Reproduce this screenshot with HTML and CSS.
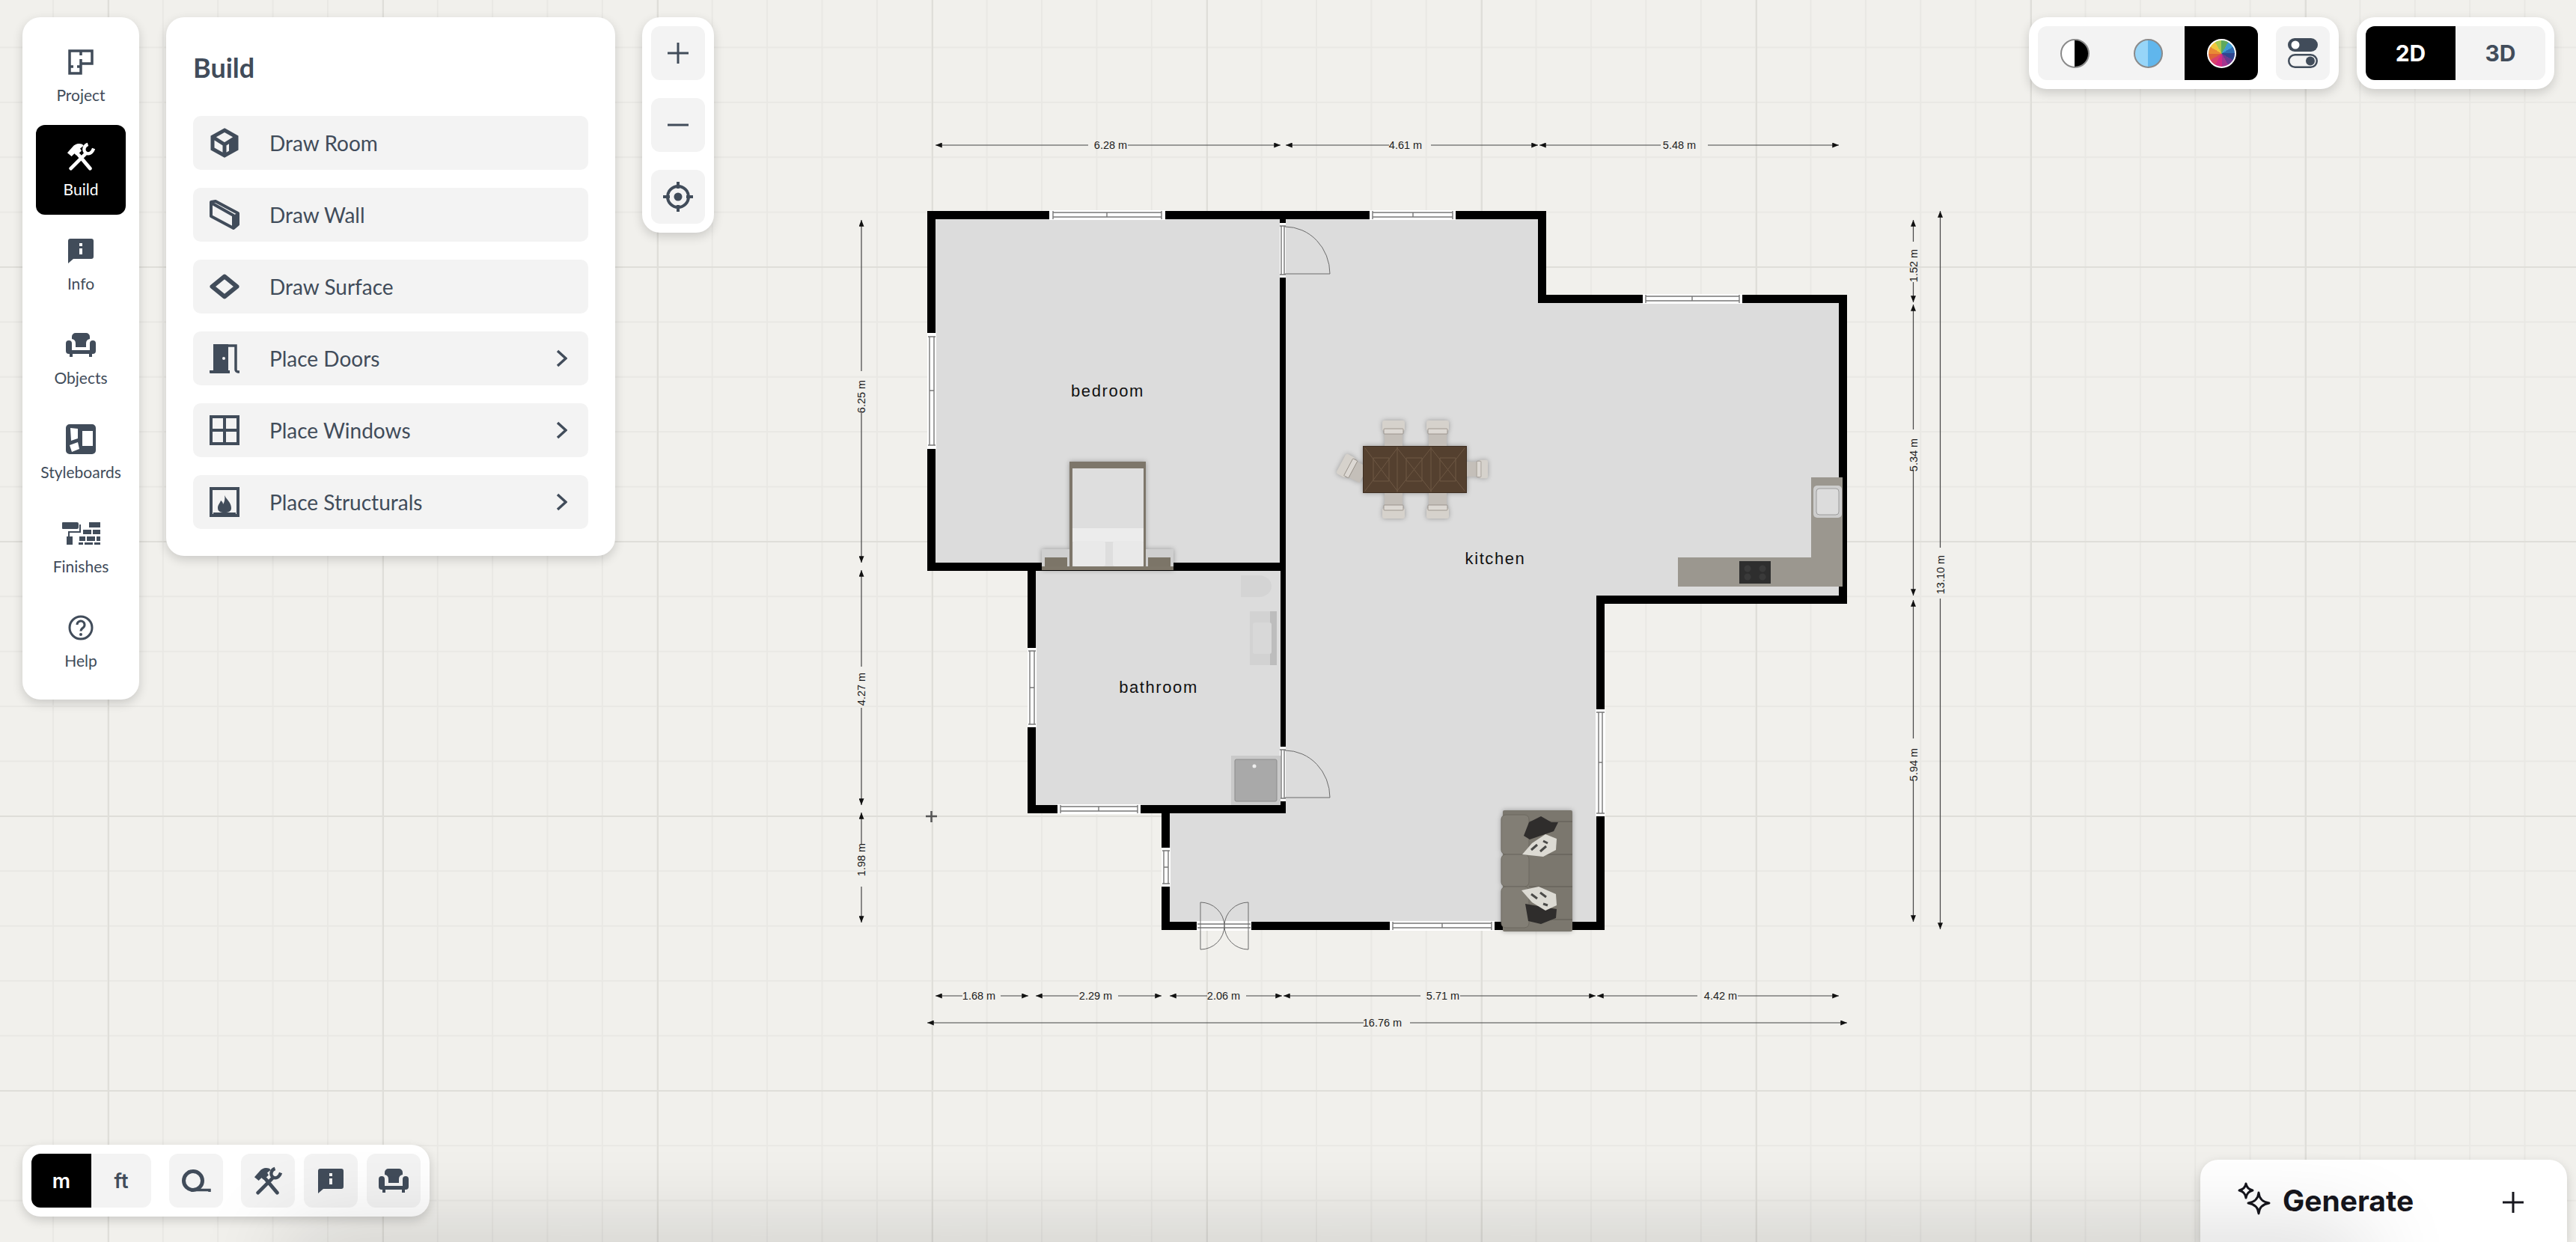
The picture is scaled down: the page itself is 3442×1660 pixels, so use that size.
FILE: index.html
```html
<!DOCTYPE html>
<html lang="en">
<head>
    <meta charset="UTF-8">
    <title>Floor Plan Editor</title>
    <link rel="stylesheet" href="styles.css">
</head>
<body>
    <svg class="plan" viewBox="0 0 3442 1660" width="3442" height="1660">
        <defs>
            <marker id="tip" viewBox="0 0 10 8" refX="10" refY="4" markerUnits="userSpaceOnUse" markerWidth="10" markerHeight="7" orient="auto-start-reverse">
                <path d="M0 0L10 4L0 8Z" fill="#111"/>
            </marker>
            <symbol id="chair" viewBox="0 0 30 34" overflow="visible">
                <rect x="0" y="0" width="30" height="14" rx="3" fill="#d6d2cc"/>
                <rect x="3" y="12" width="24" height="22" fill="#c4bfb9"/>
                <rect x="2" y="11" width="26" height="7" rx="1" fill="#dcd8d3" stroke="#8f8880" stroke-width=".8"/>
            </symbol>
        </defs>

        <!-- walls and floors -->
        <path class="walls" d="M1239 282H2066V394H2468V807H2144V1243H1552V1087H1373V763H1239Z"/>
        <rect class="floor" x="1250" y="293" width="460" height="459"/>
        <rect class="floor" x="1384" y="763" width="327" height="313"/>
        <path class="floor" d="M1718 293H2055V405H2457V796H2133V1232H1563V1087H1718Z"/>

        <!-- windows -->
        <g class="window">
            <rect x="1402" y="281" width="155" height="13"/>
            <path d="M1407 284H1552M1407 290H1552M1407 282V293M1552 282V293M1479 284V290"/>
        </g>
        <g class="window">
            <rect x="1830" y="281" width="115" height="13"/>
            <path d="M1834 284H1941M1834 290H1941M1834 282V293M1941 282V293M1888 284V290"/>
        </g>
        <g class="window">
            <rect x="2195" y="393" width="133" height="13"/>
            <path d="M2199 396H2324M2199 402H2324M2199 394V405M2324 394V405M2261 396V402"/>
        </g>
        <g class="window">
            <rect x="1239" y="445" width="12" height="155"/>
            <path d="M1242 450V595M1248 450V595M1240 450H1250M1240 595H1250M1242 522H1248"/>
        </g>
        <g class="window">
            <rect x="1373" y="866" width="12" height="106"/>
            <path d="M1376 870V968M1382 870V968M1374 870H1384M1374 968H1384M1376 919H1382"/>
        </g>
        <g class="window">
            <rect x="1413" y="1075" width="111" height="13"/>
            <path d="M1417 1078H1520M1417 1084H1520M1417 1076V1087M1520 1076V1087M1468 1078V1084"/>
        </g>
        <g class="window">
            <rect x="1552" y="1133" width="12" height="52"/>
            <path d="M1555 1137V1181M1561 1137V1181M1553 1137H1563M1553 1181H1563M1555 1159H1561"/>
        </g>
        <g class="window">
            <rect x="2132" y="948" width="13" height="143"/>
            <path d="M2136 952V1087M2141 952V1087M2133 952H2144M2133 1087H2144M2136 1019H2141"/>
        </g>
        <g class="window">
            <rect x="1857" y="1231" width="140" height="13"/>
            <path d="M1861 1234H1993M1861 1240H1993M1861 1232V1243M1993 1232V1243M1927 1234V1240"/>
        </g>

        <!-- doors -->
        <g class="window">
            <rect x="1710" y="298" width="8" height="73"/>
            <path d="M1712 302V367M1716 302V367M1710 302H1718M1710 367H1718"/>
            <rect x="1710" y="998" width="8" height="73"/>
            <path d="M1712 1002V1067M1716 1002V1067M1710 1002H1718M1710 1067H1718"/>
            <rect x="1599" y="1231" width="73" height="13"/>
            <path d="M1600 1235H1671M1600 1240H1671"/>
        </g>
        <path class="swing" d="M1717 303A60 63 0 0 1 1777 366H1717"/>
        <path class="swing" d="M1717 1003A60 63 0 0 1 1777 1066H1717"/>
        <path class="swing" d="M1604 1269V1206A32 32 0 0 1 1636 1237A32 32 0 0 1 1604 1269M1668 1269V1206A32 32 0 0 0 1636 1237A32 32 0 0 0 1668 1269"/>

        <!-- bed -->
        <g class="furniture">
            <rect x="1392" y="734" width="37" height="28" fill="#cfcfcf"/>
            <rect x="1531" y="734" width="37" height="28" fill="#cfcfcf"/>
            <rect x="1396" y="745" width="30" height="12" fill="#7c7568"/>
            <rect x="1534" y="745" width="30" height="12" fill="#7c7568"/>
            <rect x="1429" y="617" width="102" height="141" fill="#7d766a"/>
            <rect x="1433" y="626" width="95" height="131" fill="#dedede"/>
            <rect x="1433" y="706" width="95" height="18" fill="#ececec"/>
            <rect x="1434" y="723" width="43" height="34" rx="3" fill="#e9e9e9"/>
            <rect x="1487" y="723" width="41" height="34" rx="3" fill="#e9e9e9"/>
            <rect x="1392" y="757" width="176" height="5" fill="#7e776a"/>
        </g>

        <!-- bathroom -->
        <path d="M1658 769H1682A17 14.5 0 0 1 1682 798H1658Z" fill="#d4d4d4"/>
        <rect x="1670" y="817" width="36" height="72" fill="#d2d2d2"/>
        <rect x="1697" y="817" width="9" height="72" fill="#bdbdbd"/>
        <rect x="1674" y="832" width="25" height="42" rx="3" fill="#d8d8d8"/>
        <rect x="1645" y="1010" width="66" height="66" fill="#c9c9c9"/>
        <rect x="1650" y="1015" width="56" height="56" rx="2" fill="#a9a9a9" stroke="#8b8b8b"/>
        <circle cx="1676" cy="1024" r="2.5" fill="#eee"/>

        <!-- kitchen -->
        <path class="counter" d="M2420 638H2462V784H2242V745H2420Z"/>
        <rect x="2423" y="649" width="38" height="43" rx="5" fill="#cdcdcd"/>
        <rect x="2427" y="653" width="30" height="35" rx="4" fill="#dcdcdc" stroke="#9c9c9c"/>
        <rect x="2324" y="750" width="42" height="30" fill="#2e2e2e"/>
        <path d="M2335 760h.1M2355 760h.1M2335 771h.1M2355 771h.1" stroke="#3a3a3a" stroke-width="9" stroke-linecap="round"/>

        <!-- dining set -->
        <g class="furniture">
            <use href="#chair" x="1847" y="562" width="30" height="34"/>
            <use href="#chair" x="1906" y="562" width="30" height="34"/>
            <use href="#chair" transform="translate(1877 693) rotate(180)" width="30" height="34"/>
            <use href="#chair" transform="translate(1936 693) rotate(180)" width="30" height="34"/>
            <use href="#chair" transform="translate(1988 609) rotate(90)" width="36" height="28"/>
            <use href="#chair" transform="translate(1807 627) rotate(-62) translate(-18 -17)" width="36" height="34"/>
            <rect x="1821" y="596" width="139" height="63" fill="#54402f"/>
            <path class="grain" d="M1824 599L1867 656M1867 599L1824 656M1867 599L1912 656M1912 599L1867 656M1912 599L1957 656M1957 599L1912 656"/>
            <path class="grain" d="M1835 612H1856V643H1835ZM1879 612H1900V643H1879ZM1924 612H1945V643H1924ZM1867 597V658M1912 597V658"/>
            <rect x="1821.5" y="596.5" width="138" height="62" fill="none" stroke="#3f2f22"/>
        </g>

        <!-- sofa -->
        <g class="furniture">
            <rect x="2008" y="1083" width="93" height="162" rx="2" fill="#7b776e"/>
            <path class="seam" d="M2043 1098H2101M2043 1142H2101M2043 1185H2101M2043 1229H2101"/>
            <rect x="2006" y="1089" width="37" height="53" rx="6" fill="#827e75" stroke="#6d6960"/>
            <rect x="2006" y="1142" width="37" height="43" rx="6" fill="#827e75" stroke="#6d6960"/>
            <rect x="2006" y="1185" width="37" height="55" rx="6" fill="#827e75" stroke="#6d6960"/>
            <path fill="#2f2d2c" d="M2059 1091L2073 1099H2082L2076 1111L2044 1122L2036 1117L2043 1099Z"/>
            <path fill="#2f2d2c" d="M2038 1208L2067 1213L2080 1215L2079 1227L2059 1235L2042 1231Z"/>
            <path fill="#dcdad3" d="M2065 1115L2080 1121L2079 1136L2062 1145L2034 1142L2047 1127Z"/>
            <path fill="#dcdad3" d="M2033 1190L2056 1185L2079 1195L2080 1210L2065 1217L2047 1206Z"/>
            <path class="print" d="M2046 1136l8-7M2058 1138l8-7M2062 1124l6 3M2046 1195l8 6M2058 1193l8 6M2062 1208l6 2"/>
        </g>

        <!-- room labels -->
        <text class="room" x="1480" y="530">bedroom</text>
        <text class="room" x="1548" y="926">bathroom</text>
        <text class="room" x="1998" y="754">kitchen</text>

        <!-- origin -->
        <path class="origin" d="M1237 1091H1252M1244.5 1084V1099"/>

        <!-- top dimensions -->
        <path class="dim" d="M1250 194H1454M1507 194H1711"/>
        <path class="dim" d="M1718 194H1856M1912 194H2055"/>
        <path class="dim" d="M2057 194H2219M2282 194H2457"/>
        <text class="dim-label" x="1484" y="199">6.28 m</text>
        <text class="dim-label" x="1878" y="199">4.61 m</text>
        <text class="dim-label" x="2244" y="199">5.48 m</text>

        <!-- bottom dimensions -->
        <path class="dim" d="M1250 1331H1286M1337 1331H1374"/>
        <path class="dim" d="M1384 1331H1441M1494 1331H1552"/>
        <path class="dim" d="M1563 1331H1613M1665 1331H1713"/>
        <path class="dim" d="M1715 1331H1898M1951 1331H2132"/>
        <path class="dim" d="M2134 1331H2268M2322 1331H2457"/>
        <path class="dim" d="M1239 1367H1822M1884 1367H2468"/>
        <text class="dim-label" x="1308" y="1336">1.68 m</text>
        <text class="dim-label" x="1464" y="1336">2.29 m</text>
        <text class="dim-label" x="1635" y="1336">2.06 m</text>
        <text class="dim-label" x="1928" y="1336">5.71 m</text>
        <text class="dim-label" x="2299" y="1336">4.42 m</text>
        <text class="dim-label" x="1847" y="1372">16.76 m</text>

        <!-- left dimensions -->
        <path class="dim" d="M1151 294V496M1151 552V752"/>
        <path class="dim" d="M1151 762V891M1151 946V1076"/>
        <path class="dim" d="M1151 1086V1128M1151 1185V1233"/>
        <text class="dim-label" transform="translate(1156 530) rotate(-90)">6.25 m</text>
        <text class="dim-label" transform="translate(1156 921) rotate(-90)">4.27 m</text>
        <text class="dim-label" transform="translate(1156 1149) rotate(-90)">1.98 m</text>

        <!-- right dimensions -->
        <path class="dim" d="M2556.5 294V323M2556.5 377V404"/>
        <path class="dim" d="M2556.5 407V574M2556.5 628V796"/>
        <path class="dim" d="M2556.5 802V987M2556.5 1043V1232"/>
        <path class="dim" d="M2592.5 282V732M2592.5 800V1242"/>
        <text class="dim-label" transform="translate(2562 355) rotate(-90)">1.52 m</text>
        <text class="dim-label" transform="translate(2562 608) rotate(-90)">5.34 m</text>
        <text class="dim-label" transform="translate(2562 1022) rotate(-90)">5.94 m</text>
        <text class="dim-label" transform="translate(2598 768) rotate(-90)">13.10 m</text>
    </svg>

    <!-- left tools -->
    <div class="tools-left">
        <nav class="card rail">
            <a class="rail-item">
                <span class="rail-icon">
                    <svg width="34" height="34" viewBox="0 0 34 34"><path class="line" stroke-width="3.5" d="M2 2H32V19H17V32H2ZM17 2V8M17 13V19M2 23H7M12 23H17"/></svg>
                </span>
                <span>Project</span>
            </a>
            <a class="rail-item active">
                <span class="rail-icon">
                    <svg width="40" height="38" viewBox="0 0 40 40"><use href="#tools-icon"/></svg>
                </span>
                <span>Build</span>
            </a>
            <a class="rail-item">
                <span class="rail-icon">
                    <svg width="34" height="33" viewBox="0 0 34 33"><use href="#info-icon"/></svg>
                </span>
                <span>Info</span>
            </a>
            <a class="rail-item">
                <span class="rail-icon">
                    <svg width="40" height="32" viewBox="0 0 40 32"><use href="#chair-icon"/></svg>
                </span>
                <span>Objects</span>
            </a>
            <a class="rail-item">
                <span class="rail-icon">
                    <svg width="40" height="40" viewBox="0 0 40 40"><path class="solid" fill-rule="evenodd" d="M5 0H35a5 5 0 0 1 5 5V35a5 5 0 0 1-5 5H5a5 5 0 0 1-5-5V5a5 5 0 0 1 5-5ZM22 9V29H36V9ZM6 5L7 22L16 19V6ZM5 28L8 37L18 33L16 24Z"/></svg>
                </span>
                <span>Styleboards</span>
            </a>
            <a class="rail-item">
                <span class="rail-icon">
                    <svg width="51" height="30" viewBox="0 0 51 30"><path class="solid" d="M1 0H20a2 2 0 0 1 2 2V7a2 2 0 0 1-2 2H1a1 1 0 0 1-1-1V1a1 1 0 0 1 1-1ZM23 3H25V14H10V19H14V30H6V19H8V12H23ZM36 0H51V7H36ZM28 10H39V16H28ZM41 10H51V16H41ZM23 19H31V25H23ZM33 19H44V25H33ZM46 19H51V25H46ZM22 27H28V30H22ZM30 27H41V30H30ZM43 27H51V30H43Z"/></svg>
                </span>
                <span>Finishes</span>
            </a>
            <a class="rail-item">
                <span class="rail-icon">
                    <svg width="34" height="34" viewBox="0 0 34 34"><circle class="line" stroke-width="3" cx="17" cy="17" r="15"/><path class="line" stroke-width="3" d="M12 13a5 5 0 1 1 8 4c-2 1.5-3 2.5-3 4.5"/><circle class="solid" cx="17" cy="26" r="2"/></svg>
                </span>
                <span>Help</span>
            </a>
        </nav>

        <section class="card build-panel">
            <h2>Build</h2>
            <ul class="build-list">
                <li class="build-row">
                    <svg width="40" height="40" viewBox="0 0 40 40"><path class="line" stroke-width="5" d="M20 3L36 12V28L20 37L4 28V12ZM4 12L20 22L36 12M20 22V37"/><path class="solid" d="M26 20L36 14V28L26 34Z"/></svg>
                    <span>Draw Room</span>
                </li>
                <li class="build-row">
                    <svg width="40" height="40" viewBox="0 0 40 40"><path class="line" stroke-width="4" stroke-linejoin="round" d="M2 3L8 2L38 18V33L32 38L2 22ZM2 4L32 21V38"/><path class="solid" d="M32 21L38 17V33L32 38Z"/></svg>
                    <span>Draw Wall</span>
                </li>
                <li class="build-row">
                    <svg width="40" height="34" viewBox="0 0 40 34"><path class="line" stroke-width="6" stroke-linejoin="round" d="M20 3.5L36.5 17L20 30.5L3.5 17Z"/></svg>
                    <span>Draw Surface</span>
                </li>
                <li class="build-row">
                    <svg width="40" height="40" viewBox="0 0 40 40"><path class="solid" d="M5 1H25V36H5ZM0 36H27V40H1a1 1 0 0 1-1-1Z"/><circle cx="19" cy="20" r="2" fill="#f3f3f3"/><path class="line" stroke-width="3.5" d="M25 3H35V35a3 3 0 0 0 3 3H40"/></svg>
                    <span>Place Doors</span>
                    <svg class="chevron" width="15" height="24" viewBox="0 0 15 24"><path d="M2 2L13 12L2 22"/></svg>
                </li>
                <li class="build-row">
                    <svg width="40" height="40" viewBox="0 0 40 40"><path class="line" stroke-width="4" d="M2 2H38V38H2ZM20 2V38M2 20H38"/></svg>
                    <span>Place Windows</span>
                    <svg class="chevron" width="15" height="24" viewBox="0 0 15 24"><path d="M2 2L13 12L2 22"/></svg>
                </li>
                <li class="build-row">
                    <svg width="40" height="40" viewBox="0 0 40 40"><path class="line" stroke-width="4" d="M2 2H38V38H2Z"/><path class="solid" d="M20 11C22 16 29 20 29 28C29 32 26 34 20 34C14 34 11 32 11 28C11 23 14 22 15 18C17 19 18 21 18 23C20 20 21 15 20 11ZM5 34H35V38H5Z"/></svg>
                    <span>Place Structurals</span>
                    <svg class="chevron" width="15" height="24" viewBox="0 0 15 24"><path d="M2 2L13 12L2 22"/></svg>
                </li>
            </ul>
        </section>

        <div class="card zoom-panel">
            <button class="tool-btn">
                <svg width="28" height="28" viewBox="0 0 28 28"><path class="line" stroke-width="3" d="M0 14H28M14 0V28"/></svg>
            </button>
            <button class="tool-btn">
                <svg width="28" height="4" viewBox="0 0 28 4"><path class="line" stroke-width="3" d="M0 2H28"/></svg>
            </button>
            <button class="tool-btn">
                <svg width="40" height="40" viewBox="0 0 40 40"><circle class="line" stroke-width="4" cx="20" cy="20" r="14"/><circle class="solid" cx="20" cy="20" r="5.5"/><path class="line" stroke-width="4" d="M20 0V9M20 31V40M0 20H9M31 20H40"/></svg>
            </button>
        </div>
    </div>

    <!-- view mode -->
    <div class="tools-right">
        <div class="card view-panel">
            <div class="segment">
                <button class="swatch-btn"><span class="swatch swatch-mono"></span></button>
                <button class="swatch-btn"><span class="swatch swatch-blue"></span></button>
                <button class="swatch-btn active"><span class="swatch swatch-wheel"></span></button>
            </div>
            <button class="tool-btn">
                <svg width="40" height="40" viewBox="0 0 40 40"><rect class="solid" x="0" y="0" width="40" height="18" rx="9"/><circle cx="10" cy="9" r="5.5" fill="#fff"/><rect class="line" stroke-width="2.5" x="1.25" y="22.25" width="37.5" height="16.5" rx="8.25"/><circle class="solid" cx="30" cy="30.5" r="6"/></svg>
            </button>
        </div>
        <div class="card view-panel">
            <div class="segment">
                <button class="mode-btn active">2D</button>
                <button class="mode-btn">3D</button>
            </div>
        </div>
    </div>

    <!-- bottom tools -->
    <div class="card tools-bottom">
        <div class="segment">
            <button class="unit-btn active">m</button>
            <button class="unit-btn">ft</button>
        </div>
        <button class="tool-btn tape-btn">
            <svg width="40" height="30" viewBox="0 0 40 30"><circle class="line" stroke-width="5" cx="16" cy="15" r="12.5"/><path class="line" stroke-width="3.5" d="M16 27.5H38V30"/></svg>
        </button>
        <button class="tool-btn">
            <svg width="40" height="38" viewBox="0 0 40 40"><use href="#tools-icon"/></svg>
        </button>
        <button class="tool-btn">
            <svg width="34" height="33" viewBox="0 0 34 33"><use href="#info-icon"/></svg>
        </button>
        <button class="tool-btn">
            <svg width="40" height="32" viewBox="0 0 40 32"><use href="#chair-icon"/></svg>
        </button>
    </div>

    <div class="card generate">
        <svg width="44" height="44" viewBox="0 0 44 44"><path class="spark" d="M11 2Q12 9 20 11Q12 13 11 21Q10 13 2 11Q10 9 11 2ZM28 14Q29 26 42 28Q29 30 28 42Q27 30 14 28Q27 26 28 14Z"/></svg>
        <span class="generate-label">Generate</span>
        <svg class="generate-plus" width="28" height="28" viewBox="0 0 28 28"><path class="spark" d="M0 14H28M14 0V28"/></svg>
    </div>

    <div class="bottom-shade"></div>

    <!-- shared icons -->
    <svg class="icon-defs" width="0" height="0">
        <defs>
            <g id="tools-icon">
                <path class="tool-stroke" d="M26 17L6 37M17 18L33 37"/>
                <path class="tool-stroke thin" d="M30 3C24 5 23 12 27 15C31 18 36 15 38 9"/>
                <path class="tool-fill" d="M1 15L8 7C12 2 17 1 22 3L24 5L19 9L21 12L14 19L11 16L7 20Z"/>
            </g>
            <path id="info-icon" class="tool-fill" fill-rule="evenodd" d="M3 0H31a3 3 0 0 1 3 3V24a3 3 0 0 1-3 3H7L0 33V3a3 3 0 0 1 3-3ZM15 6V10H19V6ZM15 13V21H19V13Z"/>
            <g id="chair-icon">
                <path class="tool-fill" d="M8 5a5 5 0 0 1 5-5H27a5 5 0 0 1 5 5V8a6 6 0 0 0-5 6V19H13V14a6 6 0 0 0-5-6Z"/>
                <path class="tool-fill" d="M4 10a4 4 0 0 1 4 4V23H32V14a4 4 0 1 1 8 0V24a4 4 0 0 1-4 4H4a4 4 0 0 1-4-4V14a4 4 0 0 1 4-4Z"/>
                <path class="tool-fill" d="M5 28H9V32H5ZM31 28H35V32H31Z"/>
            </g>
        </defs>
    </svg>
</body>
</html>
```

FILE: styles.css
```css
* {
    box-sizing: border-box;
}

html, body {
    margin: 0;
    padding: 0;
    height: 100%;
    overflow: hidden;
}

body {
    position: relative;
    width: 3442px;
    height: 1660px;
    font-family: 'Lato', sans-serif;
    color: #414c5a;
    background-color: #f1f0ec;
    background-image:
        linear-gradient(90deg, #dfded9 2px, transparent 2px),
        linear-gradient(#dfded9 2px, transparent 2px),
        linear-gradient(90deg, #e9e8e4 2px, transparent 2px),
        linear-gradient(#e9e8e4 2px, transparent 2px);
    background-size: 367px 100%, 100% 367px, 73.4px 100%, 100% 73.4px;
    background-position: 144px 0, 0 356px, 70px 0, 0 62.4px;
}

/* floor plan */

.plan {
    position: absolute;
    top: 0;
    left: 0;
}

.walls {
    fill: #000;
}

.floor {
    fill: #dcdcdc;
}

.window rect {
    fill: #fff;
}

.window path {
    fill: none;
    stroke: #777;
    stroke-width: 1.4;
}

.swing {
    fill: none;
    stroke: #6b6b6b;
    stroke-width: 1;
}

.furniture {
    filter: drop-shadow(0 0 3px rgba(0, 0, 0, 0.3));
}

.counter {
    fill: #9b978f;
}

.grain {
    fill: none;
    stroke: #6e5844;
    stroke-width: 1;
}

.seam {
    fill: none;
    stroke: #5f5b53;
    stroke-width: 1;
}

.print {
    fill: none;
    stroke: #4a4a48;
    stroke-width: 3;
}

.origin {
    fill: none;
    stroke: #555;
    stroke-width: 2.5;
}

.room {
    font-family: 'Liberation Sans', sans-serif;
    font-size: 22px;
    letter-spacing: 1.6px;
    text-anchor: middle;
    fill: #111;
}

.dim {
    fill: none;
    stroke: #444;
    stroke-width: 1.2;
    marker-start: url(#tip);
    marker-end: url(#tip);
}

.dim-label {
    font-family: 'Liberation Sans', sans-serif;
    font-size: 14.5px;
    text-anchor: middle;
    fill: #1c1c1c;
}

/* shared */

.card {
    background: #fff;
    border-radius: 24px;
    box-shadow: 0 5px 14px rgba(0, 0, 0, 0.16);
}

.line {
    fill: none;
    stroke: #414c5a;
}

.solid {
    fill: #414c5a;
}

.icon-defs {
    position: absolute;
}

.tool-fill {
    fill: currentColor;
}

.tool-stroke {
    fill: none;
    stroke: currentColor;
    stroke-width: 5;
    stroke-linecap: round;
}

.tool-stroke.thin {
    stroke-width: 4.5;
    stroke-linecap: butt;
}

button {
    border: none;
    padding: 0;
    font: inherit;
    color: inherit;
    background: #f3f3f3;
}

.tool-btn {
    width: 72px;
    height: 72px;
    display: flex;
    align-items: center;
    justify-content: center;
    border-radius: 12px;
}

.segment {
    display: flex;
    border-radius: 12px;
    overflow: hidden;
}

.segment .active {
    background: #000;
    color: #fff;
}

/* left tools */

.tools-left {
    position: absolute;
    top: 23px;
    left: 30px;
    display: flex;
    align-items: flex-start;
    gap: 36px;
}

.rail {
    width: 156px;
    padding: 18px;
    display: flex;
    flex-direction: column;
    gap: 6px;
}

.rail-item {
    width: 120px;
    height: 120px;
    padding-top: 22px;
    display: flex;
    flex-direction: column;
    align-items: center;
    gap: 12px;
    font-size: 21px;
    line-height: 24px;
    border-radius: 12px;
}

.rail-item.active {
    background: #000;
    color: #fff;
}

.rail-icon {
    height: 40px;
    display: flex;
    align-items: center;
    justify-content: center;
}

.build-panel {
    width: 600px;
    padding: 45px 36px 36px;
}

.build-panel h2 {
    margin: 0 0 43px;
    font-size: 36px;
    line-height: 44px;
    font-weight: 700;
}

.build-list {
    list-style: none;
    margin: 0;
    padding: 0;
    display: flex;
    flex-direction: column;
    gap: 24px;
}

.build-row {
    height: 72px;
    padding: 0 28px 0 22px;
    display: flex;
    align-items: center;
    gap: 40px;
    font-size: 28px;
    line-height: 70px;
    background: #f3f3f3;
    border-radius: 10px;
}

.chevron {
    margin-left: auto;
}

.chevron path {
    fill: none;
    stroke: #414c5a;
    stroke-width: 3.5;
}

.zoom-panel {
    width: 96px;
    padding: 12px;
    display: flex;
    flex-direction: column;
    gap: 24px;
}

/* view mode */

.tools-right {
    position: absolute;
    top: 23px;
    right: 29px;
    display: flex;
    gap: 24px;
}

.view-panel {
    padding: 12px;
    display: flex;
    gap: 24px;
}

.swatch-btn {
    width: 98px;
    height: 72px;
    display: flex;
    align-items: center;
    justify-content: center;
}

.swatch {
    width: 39px;
    height: 39px;
    border-radius: 50%;
    border: 2px solid #8a8a8a;
}

.swatch-mono {
    background: linear-gradient(90deg, #fff 50%, #000 50%);
}

.swatch-blue {
    background: linear-gradient(90deg, #97d5f8 50%, #60b6ec 50%);
}

.swatch-wheel {
    border-color: #fff;
    background: conic-gradient(#5fa95e 0 30deg, #3f9bd2 30deg 60deg, #2f6cb0 60deg 90deg, #2f468f 90deg 120deg, #6a3a8f 120deg 150deg, #a2358e 150deg 180deg, #d32a82 180deg 210deg, #d8416a 210deg 240deg, #de6238 240deg 270deg, #e98a35 270deg 300deg, #f1c53c 300deg 330deg, #a9c952 330deg 360deg);
}

.mode-btn {
    width: 120px;
    height: 72px;
    font-family: 'Inter', sans-serif;
    font-size: 30px;
    font-weight: 700;
}

/* bottom tools */

.tools-bottom {
    position: absolute;
    left: 30px;
    top: 1530px;
    width: 544px;
    height: 96px;
    padding: 12px;
    display: flex;
    gap: 12px;
}

.unit-btn {
    width: 80px;
    height: 72px;
    font-family: 'Inter', sans-serif;
    font-size: 27px;
    font-weight: 600;
}

.tape-btn {
    margin: 0 12px;
}

/* generate */

.generate {
    position: absolute;
    left: 2940px;
    top: 1550px;
    width: 490px;
    height: 110px;
    padding: 30px 58px 0 50px;
    display: flex;
    align-items: flex-start;
    gap: 16px;
    border-radius: 24px 24px 0 0;
}

.generate-label {
    font-family: 'Inter', sans-serif;
    font-size: 39px;
    font-weight: 700;
    line-height: 50px;
    color: #16161d;
}

.generate-plus {
    margin: 13px 0 0 auto;
}

.spark {
    fill: none;
    stroke: #16161d;
    stroke-width: 3;
    stroke-linejoin: round;
}

.bottom-shade {
    position: absolute;
    left: 380px;
    top: 1660px;
    width: 2780px;
    height: 60px;
    box-shadow: 0 0 120px rgba(0, 0, 0, 0.24);
    pointer-events: none;
}
```
